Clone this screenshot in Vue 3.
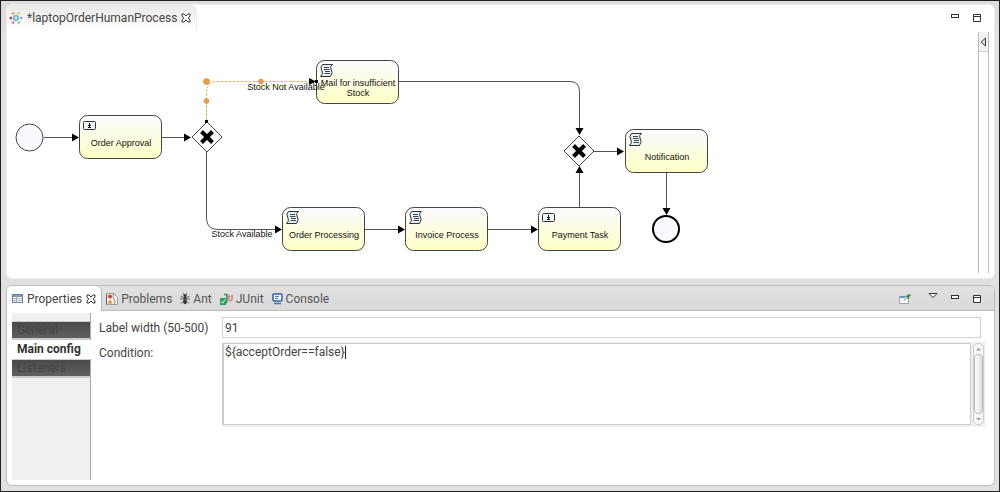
<script setup>
import { ref } from 'vue'

const labelWidth = ref('91')
const condition = ref('${acceptOrder==false}')
const section = ref('Main config')
const sections = ['General', 'Main config', 'Listeners']
const views = ['Problems', 'Ant', 'JUnit', 'Console']

const tasks = [
  { x: 79, y: 115, kind: 'user', lines: ['Order Approval'] },
  { x: 316, y: 60, kind: 'script', lines: ['Mail for insufficient', 'Stock'] },
  { x: 282, y: 207, kind: 'script', lines: ['Order Processing'] },
  { x: 405, y: 207, kind: 'script', lines: ['Invoice Process'] },
  { x: 538, y: 207, kind: 'user', lines: ['Payment Task'] },
  { x: 625, y: 129, kind: 'script', lines: ['Notification'] }
]
const gateways = [{ x: 207, y: 137 }, { x: 579, y: 151 }]
const flows = [
  'M43.5 137.5H73', 'M162 137.5H185', 'M365 229.5H399', 'M488 229.5H532',
  'M206.5 152V218Q206.5 229.5 218 229.5H276',
  'M399 81.5H570Q579.5 81.5 579.5 92V129',
  'M579.5 207V172', 'M594 151.5H618', 'M666.5 172V209'
]
const arrows = [
  [79, 137.5, 0], [191, 137.5, 0], [282, 229.5, 0], [405, 229.5, 0], [538, 229.5, 0],
  [624, 151.5, 0], [579.5, 135, 90], [579.5, 166, -90], [666.5, 215, 90]
]
</script>

<template>
  <div class="window">
    <section class="editor">
      <header class="editor-bar">
        <div class="editor-tab">
          <svg width="14" height="14" viewBox="0 0 14 14" aria-hidden="true">
            <circle cx="7" cy="7" r="2.2" fill="#d9f1fa" stroke="#4fb3d9" stroke-width="1.5" />
            <circle cx="1.8" cy="7" r="1.5" fill="#c0404f" />
            <circle cx="12.2" cy="7" r="1.3" fill="#a79be0" />
            <circle cx="4.2" cy="2.6" r="1.4" fill="#eda04c" />
            <circle cx="9.8" cy="2.6" r="1.4" fill="#edcf55" />
            <circle cx="4.2" cy="11.6" r="1.4" fill="#dc70c4" />
            <circle cx="9.8" cy="11.6" r="1.4" fill="#96cf70" />
          </svg>
          <span>*laptopOrderHumanProcess</span>
          <button class="icon" aria-label="Close editor">
            <svg width="10" height="10" viewBox="0 0 10 10"><path d="M1 1H3L5 3L7 1H9V3L7.3 5L9 7V9H7L5 7L3 9H1V7L2.7 5L1 3Z" fill="#fff" stroke="#333" /></svg>
          </button>
        </div>
        <div class="tools">
          <button class="icon" aria-label="Minimize editor">
            <svg width="10" height="10" viewBox="0 0 10 10"><rect x="1.5" y="1.5" width="7" height="3" fill="#fff" stroke="#333" /></svg>
          </button>
          <button class="icon" aria-label="Maximize editor">
            <svg width="10" height="10" viewBox="0 0 10 10"><path d="M1.5 1.5H8.5V8.5H1.5ZM1.5 3.5H8.5" fill="#fff" stroke="#333" /></svg>
          </button>
        </div>
      </header>

      <div class="editor-body">
        <svg class="diagram" role="img" aria-label="Laptop order process">
          <defs>
            <linearGradient id="task-fill" x1="0" y1="0" x2="0" y2="1">
              <stop offset="0" stop-color="#fafbff" />
              <stop offset="1" stop-color="#ffffc4" />
            </linearGradient>
            <g id="script-icon">
              <path d="M2.5 .5H12.5Q9.5 2.5 11 5Q13.5 8.5 10.5 12.5H.5Q3.5 10 2 7Q-.5 3 2.5 .5Z" fill="#e3f0f9" stroke="#333" />
              <path d="M4 3.5H9M4 5.500H9.500M5 7.500H10M4.500 9.500H10" stroke="#444" />
            </g>
            <g id="user-icon">
              <rect x=".5" y=".5" width="12" height="8" rx="1" fill="#eaf4fb" stroke="#333" />
              <path d="M6.500 2V7M5 4.500H8M5 6.500H8" stroke="#111" fill="none" />
            </g>
          </defs>
          <g transform="translate(-7 -30)">
            <path v-for="d in flows" :key="d" :d="d" class="flow" />
            <path
              v-for="(a, i) in arrows" :key="i" d="M0 0L-7 -4V4Z"
              :transform="`translate(${a[0]} ${a[1]}) rotate(${a[2]})`"
            />
            <path class="flow-selected" d="M206.5 120V93Q206.5 81.5 218 81.5H311" />
            <path d="M316 81.500L309 78V85Z" />
            <g fill="#eda040" stroke="#c98025" stroke-width=".6">
              <circle cx="206.500" cy="81.500" r="3" />
              <circle cx="206.500" cy="101" r="2.400" />
              <circle cx="261" cy="81.500" r="2.400" />
            </g>

            <circle class="event" cx="29.500" cy="137.500" r="13.500" />
            <circle class="event end" cx="666" cy="229" r="13" />

            <g v-for="g in gateways" :key="g.x" :transform="`translate(${g.x} ${g.y})`">
              <path d="M0 -15L15 0L0 15L-15 0Z" class="gateway" />
              <path d="M-5.500 -5.500L5.500 5.500M5.500 -5.500L-5.500 5.500" stroke="#000" stroke-width="4" />
            </g>
            <rect x="205" y="120" width="3" height="3" />

            <g v-for="t in tasks" :key="t.lines[0]" :transform="`translate(${t.x} ${t.y})`">
              <rect class="task" x=".5" y=".5" width="82" height="43" rx="8" />
              <use :href="`#${t.kind}-icon`" x="4" :y="t.kind === 'user' ? 6 : 4" />
              <text v-for="(line, i) in t.lines" :key="line" x="42" :y="(t.lines.length > 1 ? 26 : 31) + i * 10" text-anchor="middle">{{ line }}</text>
            </g>
            <rect x="315" y="80" width="3" height="3" />
            <text x="286" y="90" text-anchor="middle">Stock Not Available</text>
            <text x="242" y="237" text-anchor="middle">Stock Available</text>
          </g>
        </svg>
        <div class="palette">
          <button class="icon palette-toggle" aria-label="Show palette">
            <svg width="9" height="10" viewBox="0 0 9 10"><path d="M6.500 1V9L2 5Z" fill="#ddd" stroke="#444" /></svg>
          </button>
        </div>
      </div>
    </section>

    <section class="panel">
      <header class="panel-bar">
        <div class="view-tab active">
          <svg width="11" height="10" viewBox="0 0 11 10" aria-hidden="true">
            <rect x=".5" y=".5" width="10" height="8" fill="#fff" stroke="#6d7f96" />
            <path d="M1 1H10V3H1Z" fill="#7d9cc4" />
            <path d="M1 4.500H10M1 6.500H10M4.500 3V8" stroke="#a9b1bb" />
          </svg>
          <span>Properties</span>
          <button class="icon" aria-label="Close Properties">
            <svg width="10" height="10" viewBox="0 0 10 10"><path d="M1 1H3L5 3L7 1H9V3L7.3 5L9 7V9H7L5 7L3 9H1V7L2.7 5L1 3Z" fill="#fff" stroke="#333" /></svg>
          </button>
        </div>
        <button v-for="v in views" :key="v" class="view-tab">
          <svg v-if="v === 'Problems'" width="12" height="12" viewBox="0 0 12 12">
            <path d="M.5 .5H7.500L11.500 4V11.500H.5Z" fill="#f7f1e4" stroke="#a99b88" />
            <path d="M7.500 .5Q6 4 8 6T8 11.500" fill="none" stroke="#7790b8" />
            <circle cx="4" cy="3.500" r="2" fill="#cc3c32" />
            <path d="M1.500 10.500L4 6.500L6.500 10.500Z" fill="#d98a3c" />
            <path d="M.5 1V11.500" stroke="#666" />
          </svg>
          <svg v-else-if="v === 'Ant'" width="10" height="12" viewBox="0 0 10 12">
            <circle cx="5" cy="2.500" r="1.600" fill="#333" /><circle cx="5" cy="5.300" r="1.500" fill="#333" />
            <ellipse cx="5" cy="8.800" rx="1.900" ry="2.400" fill="#333" />
            <path d="M3 0L4.500 2M7 0L5.500 2M.5 3L5 5.500L9.500 3M0 6H10M1 10.500L5 6.500L9 10.500" fill="none" stroke="#444" stroke-width=".8" />
          </svg>
          <svg v-else-if="v === 'JUnit'" width="13" height="12" viewBox="0 0 13 12">
            <rect x="0" y="5" width="6" height="7" fill="#2f9a5c" />
            <path d="M1.200 8.500L2.600 10.200L5 6.500" fill="none" stroke="#fff" />
            <path d="M4 1.500H7V8Q7 10 5 10" fill="none" stroke="#32935a" stroke-width="1.500" />
            <path d="M9 3V6.500Q9 8 10.500 8T12 6.500V3M8 3H10M11 3H13" fill="none" stroke="#d9534f" />
          </svg>
          <svg v-else width="11" height="12" viewBox="0 0 11 12">
            <rect x="1" y="1" width="9" height="7" rx="1" fill="#f2f6fd" stroke="#345f9f" stroke-width="1.500" />
            <path d="M3 3.500H7M3 5.500H6" stroke="#5879ac" />
            <path d="M2 10.500H9" stroke="#5578ac" stroke-width="1.500" />
          </svg>
          <span>{{ v }}</span>
        </button>
        <div class="tools">
          <button class="icon pin" aria-label="Pin view">
            <svg width="13" height="12" viewBox="0 0 13 12">
              <rect x=".5" y="3.500" width="9" height="7" fill="#fff" stroke="#9aa6b0" />
              <path d="M1 3H6V5H1Z" fill="#5b96cf" />
              <path d="M5 7.500L8 4.500" stroke="#555" /><path d="M6.500 3L9 2L10 .5L12 2.500L10.500 3.500L9.500 6.500Z" fill="#3f9148" />
            </svg>
          </button>
          <button class="icon" aria-label="View menu">
            <svg width="10" height="14" viewBox="0 0 10 14"><path d="M1 1.500H9L5 5.500Z" fill="#fff" stroke="#333" /></svg>
          </button>
          <button class="icon" aria-label="Minimize view">
            <svg width="10" height="10" viewBox="0 0 10 10"><rect x="1.500" y="1.500" width="7" height="3" fill="#fff" stroke="#333" /></svg>
          </button>
          <button class="icon" aria-label="Maximize view">
            <svg width="10" height="10" viewBox="0 0 10 10"><path d="M1.500 1.500H8.500V8.500H1.500ZM1.500 3.500H8.500" fill="#fff" stroke="#333" /></svg>
          </button>
        </div>
      </header>

      <div class="panel-body">
        <nav class="sections">
          <button
            v-for="s in sections" :key="s" class="section" :class="{ current: s === section }"
            @click="section = s"
          >{{ s }}</button>
        </nav>
        <form class="form" @submit.prevent>
          <label for="label-width">Label width (50-500)</label>
          <input id="label-width" v-model="labelWidth" type="text">
          <label for="condition">Condition:</label>
          <div class="memo">
            <textarea id="condition" v-model="condition" spellcheck="false"></textarea>
            <span class="caret"></span>
            <div class="scrollbar" aria-hidden="true">
              <svg width="9" height="10" viewBox="0 0 9 10"><path d="M2 6.500L4.500 4L7 6.500Z" fill="#999" /></svg>
              <div class="thumb"></div>
              <svg width="9" height="10" viewBox="0 0 9 10"><path d="M2 4L4.500 6.500L7 4Z" fill="#999" /></svg>
            </div>
          </div>
        </form>
      </div>
    </section>
  </div>
</template>

<style>
body { background: #e1dfe0; }
</style>

<style scoped>
* { box-sizing: border-box; }
.window {
  display: flex; flex-direction: column; gap: 6px;
  min-height: 100vh; padding: 3px 4px 5px 5px;
  border: 1px solid #222; background: linear-gradient(#dedadd, #e1e0e0 40px);
  font: 12px/16px Roboto, "Noto Sans", sans-serif; color: #444;
}
button { font: inherit; color: inherit; border: 0; padding: 0; background: none; }
svg { display: block; flex: none; }
.icon { display: flex; align-items: center; justify-content: center; }
.tools { display: flex; align-items: center; gap: 12px; margin-left: auto; padding-right: 12px; }
.pin { margin-right: 4px; }

.editor { background: #fff; border: 1px solid #eee; border-radius: 6px; overflow: hidden; }
.editor-bar { display: flex; height: 25px; }
.editor-tab {
  display: flex; align-items: center; gap: 4px; padding: 0 5px 0 2px;
  background: linear-gradient(#e9e9e9, #fff); border-right: 1px solid #eee; border-radius: 0 6px 0 0;
}
.editor-body { display: flex; height: 248px; padding: 0 5px 5px 0; }
.diagram { flex: 1; min-width: 0; height: 100%; overflow: hidden; }
.diagram text { font: 9px "Liberation Sans", Arial, sans-serif; fill: #111; }
.flow { fill: none; stroke: #555; }
.flow-selected { fill: none; stroke: #eab36c; stroke-dasharray: 3 1; }
.task { fill: url(#task-fill); stroke: #444; }
.event { fill: #f9faff; stroke: #444; }
.end { stroke: #000; stroke-width: 2; }
.gateway { fill: #fcfcff; stroke: #444; }
.palette { width: 11px; margin-top: 2px; border: solid #bbb; border-width: 0 1px; }
.palette-toggle { width: 100%; height: 20px; background: #f2f2f2; border-bottom: 1px solid #ccc; }

.panel {
  flex: 1; display: flex; flex-direction: column;
  background: #fff; border: 1px solid #bdbdbd; border-radius: 6px; overflow: hidden;
}
.panel-bar { display: flex; height: 25px; background: linear-gradient(#e1e1e1, #d9d9d9); box-shadow: inset 0 -1px #bbb; }
.view-tab { display: flex; align-items: center; gap: 3px; padding: 0 4px; color: #555; }
.view-tab.active {
  gap: 4px; padding: 0 5px; background: #fff; color: #444;
  border-right: 1px solid #bbb; border-radius: 0 6px 0 0;
}
.panel-body { flex: 1; display: flex; gap: 8px; padding: 2px 9px 5px 5px; }
.sections { display: flex; flex-direction: column; width: 79px; padding-top: 8px; background: #f1f0ef; border-right: 1px solid #aaa; }
.section {
  height: 19px; padding: 0 5px; line-height: 16px; text-align: left; white-space: nowrap;
  color: #454443; background: linear-gradient(#4b4a49, #62605e); border: solid #ccc; border-width: 1px 0 2px;
}
.section.current { margin-right: -1px; background: #fff; border-color: #fff; color: #333; font-weight: bold; }
.form { flex: 1; display: grid; grid-template-columns: 114px 1fr; grid-template-rows: 21px 85px; gap: 4px 9px; padding-top: 4px; align-content: start; }
.form label { padding-top: 3px; white-space: nowrap; }
.form input {
  min-width: 0; margin-right: 4px; padding: 0 2px; border: 1px solid #d2d2d2;
  font: inherit; color: inherit; outline: 0;
}
.memo { position: relative; display: flex; min-width: 0; gap: 2px; padding: 1px 1px 2px 0; background: #efefef; }
.memo textarea {
  flex: 1; min-width: 0; padding: 0 1px; resize: none; overflow: hidden;
  border: 1px solid #ccc; border-left-width: 2px; outline: 0; font: inherit; color: inherit;
}
.caret { position: absolute; left: 123px; top: 4px; width: 1px; height: 13px; background: #222; }
.scrollbar { display: flex; flex-direction: column; width: 11px; border: 1px solid #ccc; border-radius: 5px; background: #f7f7f7; }
.thumb { flex: 1; border: 1px solid #bbb; border-radius: 4px; background: linear-gradient(90deg, #fff, #ddd); }
</style>
